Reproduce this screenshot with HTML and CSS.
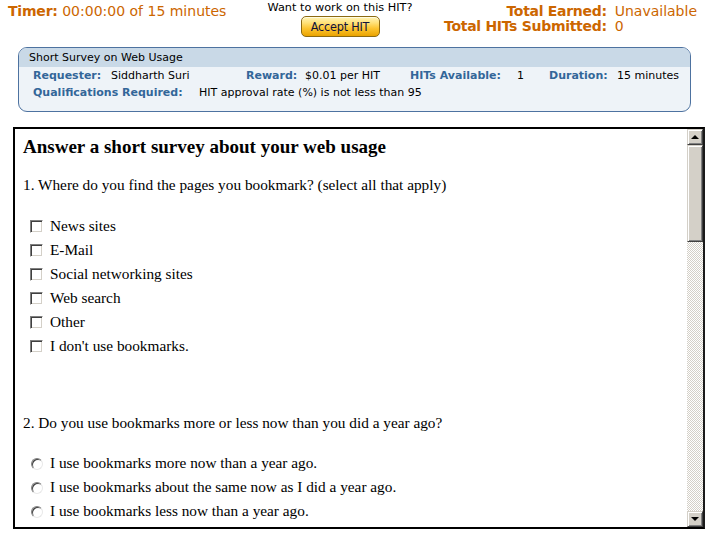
FILE: index.html
```html
<!DOCTYPE html>
<html>
<head>
<meta charset="utf-8">
<link rel="stylesheet" href="styles.css">
</head>
<body>
<div class="top">
  <div class="timer"><b>Timer:</b> 00:00:00 of 15 minutes</div>
  <div class="accept">
    <div class="want">Want to work on this HIT?</div>
    <button class="accept-btn">Accept HIT</button>
  </div>
  <div class="totals">
    <span class="tl">Total Earned:</span><span class="tv">Unavailable</span>
    <span class="tl">Total HITs Submitted:</span><span class="tv">0</span>
  </div>
</div>

<div class="hit">
  <div class="hit-title">Short Survey on Web Usage</div>
  <div class="hit-row">
    <span class="lab c1">Requester:</span><span class="val c2">Siddharth Suri</span>
    <span class="lab c3">Reward:</span><span class="val c4">$0.01 per HIT</span>
    <span class="lab c5">HITs Available:</span><span class="val c6">1</span>
    <span class="lab c7">Duration:</span><span class="val">15 minutes</span>
  </div>
  <div class="hit-row">
    <span class="lab cq">Qualifications Required:</span><span class="val">HIT approval rate (%) is not less than 95</span>
  </div>
</div>

<div class="frame">
  <div class="frame-body">
    <h3 class="title">Answer a short survey about your web usage</h3>
    <p class="q q1">1. Where do you find the pages you bookmark? (select all that apply)</p>
    <ul class="opts checks">
      <li><span class="cb"></span>News sites</li>
      <li><span class="cb"></span>E-Mail</li>
      <li><span class="cb"></span>Social networking sites</li>
      <li><span class="cb"></span>Web search</li>
      <li><span class="cb"></span>Other</li>
      <li><span class="cb"></span>I don't use bookmarks.</li>
    </ul>
    <p class="q q2">2. Do you use bookmarks more or less now than you did a year ago?</p>
    <ul class="opts radios">
      <li><span class="rb"></span>I use bookmarks more now than a year ago.</li>
      <li><span class="rb"></span>I use bookmarks about the same now as I did a year ago.</li>
      <li><span class="rb"></span>I use bookmarks less now than a year ago.</li>
    </ul>
  </div>
  <div class="sb">
    <div class="sb-btn"><span class="arr up"></span></div>
    <div class="sb-thumb"></div>
    <div class="sb-track"></div>
    <div class="sb-btn"><span class="arr down"></span></div>
  </div>
</div>
</body>
</html>
```

FILE: styles.css
```css
html, body {
  margin: 0;
  padding: 0;
  background: #fff;
}
body {
  width: 712px;
  height: 534px;
  overflow: hidden;
  font-family: "DejaVu Sans", Verdana, sans-serif;
}

/* ---- top bar ---- */
.top {
  display: flex;
  align-items: flex-start;
  height: 42px;
}
.timer {
  box-sizing: border-box;
  width: 266px;
  padding: 4px 0 0 8px;
  font-size: 14px;
  line-height: 15px;
  color: #cc6600;
  white-space: nowrap;
}
.timer b {
  letter-spacing: -0.2px;
}
.accept {
  width: 148px;
  text-align: center;
  font-size: 11.3px;
  color: #000;
}
.want {
  line-height: 13px;
  padding-top: 1px;
  white-space: nowrap;
}
.accept-btn {
  display: block;
  margin: 2px auto 0;
  width: 79px;
  height: 21px;
  padding: 0;
  box-sizing: border-box;
  border: 1px solid #8c6a12;
  border-radius: 5px;
  background: linear-gradient(#fff4b8 0%, #ffe27a 30%, #fcc531 60%, #eaa300 100%);
  box-shadow: inset 0 1px 0 #fffbe0;
  font-family: "DejaVu Sans Condensed", "DejaVu Sans", sans-serif;
  font-size: 12.5px;
  line-height: 19px;
  letter-spacing: -0.2px;
  color: #10103c;
}
.totals {
  flex: 1;
  display: grid;
  grid-template-columns: auto auto;
  column-gap: 8px;
  justify-content: end;
  align-content: start;
  padding: 4px 15px 0 0;
  font-size: 14px;
  line-height: 15px;
  color: #cc6600;
  white-space: nowrap;
}
.tl {
  text-align: right;
  font-weight: bold;
  letter-spacing: -0.3px;
}

/* ---- HIT summary box ---- */
.hit {
  box-sizing: border-box;
  margin: 5px 0 0 18px;
  width: 673px;
  height: 65px;
  border: 1px solid #4d72a0;
  border-radius: 9px;
  background: #eef3f8;
  overflow: hidden;
  font-size: 11px;
}
.hit-title {
  height: 19px;
  line-height: 20px;
  padding-left: 10px;
  background: #c9d9e7;
  color: #000;
}
.hit-row {
  display: flex;
  padding-left: 14px;
  line-height: 17px;
  white-space: nowrap;
}
.lab {
  font-weight: bold;
  color: #336699;
}
.val {
  color: #000;
}
.c1 { width: 78px; }
.c2 { width: 135px; }
.c3 { width: 59px; }
.c4 { width: 105px; }
.c5 { width: 107px; }
.c6 { width: 32px; }
.c7 { width: 68px; }
.cq { width: 166px; }

/* ---- survey frame ---- */
.frame {
  box-sizing: border-box;
  display: flex;
  margin: 15px 0 0 13px;
  width: 692px;
  height: 402px;
  border: 2px solid #000;
  border-right-color: #1a1a1a;
  overflow: hidden;
}
.frame-body {
  flex: 1;
  padding: 6px 0 0 8px;
  overflow: hidden;
  font-family: "Liberation Serif", "Times New Roman", serif;
  font-size: 15.3px;
  color: #000;
}
.title {
  margin: 0;
  font-size: 19px;
  line-height: 24px;
  font-weight: bold;
}
.q {
  margin: 0;
  line-height: 24px;
}
.q1 { margin-top: 14px; }
.q2 { margin-top: 53px; }
.opts {
  list-style: none;
  margin: 17px 0 0;
  padding: 0 0 0 7px;
}
.radios {
  margin-top: 16px;
  padding-left: 8px;
}
.opts li {
  display: flex;
  align-items: center;
  height: 24px;
  white-space: nowrap;
}
.cb {
  box-sizing: border-box;
  width: 13px;
  height: 13px;
  margin: 1px 7px 0 0;
  background: #fff;
  border: 1px solid;
  border-color: #808080 #ffffff #ffffff #808080;
  box-shadow: inset 1px 1px 0 #404040, inset -1px -1px 0 #d4d0c8;
}
.rb {
  box-sizing: border-box;
  width: 12px;
  height: 12px;
  margin: 2px 7px 0 0;
  border-radius: 50%;
  background: #fff;
  border: 1px solid;
  border-color: #808080 #e8e8e8 #e8e8e8 #808080;
  box-shadow: inset 1px 1px 0 #404040;
}

/* ---- classic scrollbar ---- */
.sb {
  width: 16px;
  display: flex;
  flex-direction: column;
}
.sb-btn, .sb-thumb {
  box-sizing: border-box;
  background: #d4d0c8;
  border: 1px solid;
  border-color: #d4d0c8 #404040 #404040 #d4d0c8;
  box-shadow: inset 1px 1px 0 #fff, inset -1px -1px 0 #808080;
}
.sb-btn {
  height: 16px;
  display: flex;
  align-items: center;
  justify-content: center;
}
.sb-thumb {
  height: 97px;
}
.sb-track {
  flex: 1;
  background-color: #fff;
  background-image: repeating-conic-gradient(#d4d0c8 0 25%, #ffffff 0 50%);
  background-size: 2px 2px;
}
.arr {
  width: 0;
  height: 0;
  border-left: 4px solid transparent;
  border-right: 4px solid transparent;
}
.arr.up {
  border-bottom: 4px solid #000;
}
.arr.down {
  border-top: 4px solid #000;
}
```
